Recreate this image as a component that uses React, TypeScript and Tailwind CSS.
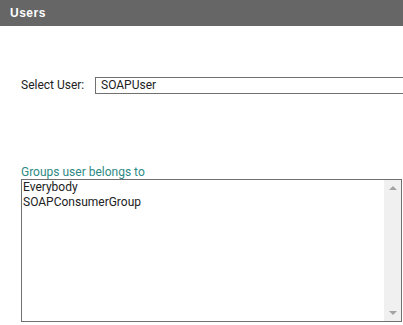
export default function App() {
  const groups = ["Everybody", "SOAPConsumerGroup"];

  return (
    <div className="w-[403px] h-[325px] bg-white overflow-hidden font-['Roboto',sans-serif] text-[12px] text-[#222]">
      <div className="h-[26px] bg-[#666666] flex items-center pl-[10px]">
        <span className="text-white font-bold text-[12px] tracking-[0.5px] font-['Liberation_Sans',sans-serif]">Users</span>
      </div>

      <div className="pl-[21px] pt-[50px] flex items-center">
        <label className="w-[74px]">Select User:</label>
        <div className="flex-1 h-[17px] border border-[#707070] border-r-0 flex items-center pl-[5px] -mr-[4px]">
          SOAPUser
        </div>
      </div>

      <div className="pl-[21px] pr-[1px] pt-[71px]">
        <div className="text-[#2e8a85] leading-[14px]">Groups user belongs to</div>
        <div className="h-[143px] border border-[#707070] flex">
          <ul className="flex-1 pl-[1px] leading-[15px]">
            {groups.map((g) => (
              <li key={g}>{g}</li>
            ))}
          </ul>
          <div className="w-[17px] bg-[#f0f0f0] flex flex-col justify-between items-center py-[6px]">
            <svg width="8" height="4" viewBox="0 0 8 4">
              <path d="M0 4 L4 0 L8 4 Z" fill="#a3a3a3" />
            </svg>
            <svg width="8" height="4" viewBox="0 0 8 4">
              <path d="M0 0 L4 4 L8 0 Z" fill="#a3a3a3" />
            </svg>
          </div>
        </div>
      </div>
    </div>
  );
}
